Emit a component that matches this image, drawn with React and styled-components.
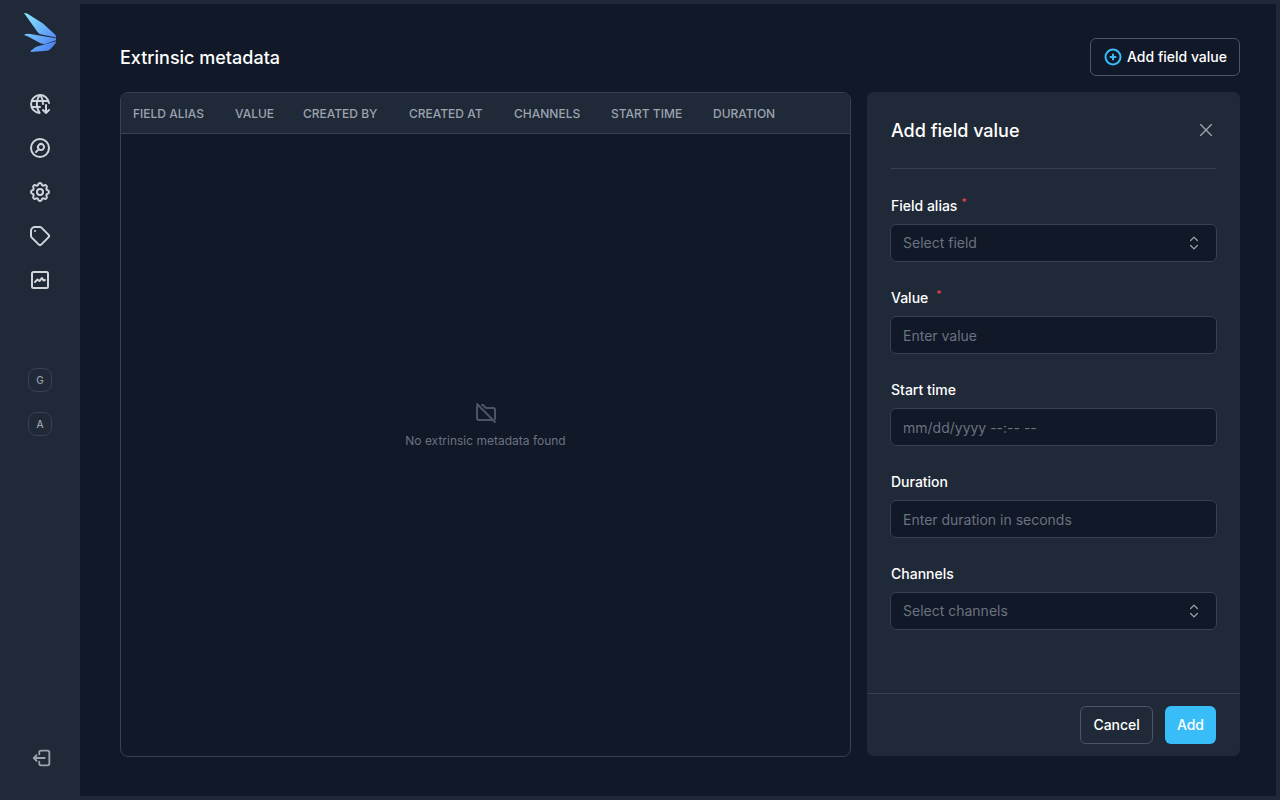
import React from "react";
import styled, { createGlobalStyle } from "styled-components";

const Global = createGlobalStyle`
  *, *::before, *::after { box-sizing: border-box; }
  body {
    margin: 0;
    background: #1f2937;
    color: #fff;
    font-family: Inter, "Liberation Sans", sans-serif;
    font-size: 14px;
    line-height: 20px;
  }
  button, input, select { font: inherit; }
`;

const Shell = styled.div`
  display: flex;
  min-height: 100vh;
`;

const Sidebar = styled.nav`
  flex: 0 0 80px;
  display: flex;
  flex-direction: column;
  align-items: center;
  padding: 12px 0 31px;
`;

const LogoLink = styled.a`
  display: flex;
  width: 34px;
  height: 40px;
`;

const NavList = styled.ul`
  list-style: none;
  margin: 40px 0 0;
  padding: 0;
  display: grid;
  gap: 20px;
`;

const NavLink = styled.a`
  display: flex;
  color: #d1d5db;
`;

const Badges = styled.div`
  display: grid;
  gap: 20px;
  margin-top: 76px;
`;

const Badge = styled.button`
  width: 24px;
  height: 24px;
  padding: 0;
  border: 1px solid #374151;
  border-radius: 8px;
  background: transparent;
  color: #9ca3af;
  font-size: 10px;
  line-height: 16px;
  font-weight: 500;
`;

const IconButton = styled.button`
  display: flex;
  padding: 0;
  border: 0;
  background: transparent;
  color: #9ca3af;
`;

const LogoutButton = styled(IconButton)`
  margin-top: auto;
  padding-left: 4px;
`;

const Main = styled.main`
  flex: 1;
  min-width: 0;
  display: flex;
  flex-direction: column;
  gap: 16px;
  margin: 4px 4px 4px 0;
  padding: 34px 36px 39px 40px;
  background: #111827;
`;

const PageHeader = styled.header`
  display: flex;
  align-items: center;
  justify-content: space-between;
`;

const Title = styled.h1`
  margin: 0;
  padding-top: 2px;
  font-size: 18px;
  line-height: 28px;
  font-weight: 500;
`;

const Button = styled.button`
  display: inline-flex;
  align-items: center;
  gap: 4px;
  height: 38px;
  padding: 0 12px;
  border: ${(p) => (p.$primary ? "0" : "1px solid #4b5563")};
  border-radius: 6px;
  background: ${(p) => (p.$primary ? "#38bdf8" : "transparent")};
  color: #fff;
  font-weight: 500;
`;

const Accent = styled.span`
  display: flex;
  color: #38bdf8;
`;

const Content = styled.div`
  flex: 1;
  display: grid;
  grid-template-columns: minmax(0, 731fr) minmax(0, 373fr);
  gap: 16px;
`;

const TableCard = styled.section`
  display: flex;
  flex-direction: column;
  border: 1px solid #374151;
  border-radius: 8px;
  overflow: hidden;
`;

const HeadStrip = styled.div`
  background: #1f2937;
  border-bottom: 1px solid #374151;
`;

const Table = styled.table`
  border-collapse: collapse;
  table-layout: fixed;
`;

const Th = styled.th`
  width: ${(p) => p.$width}px;
  height: 40px;
  padding: 2px 0 0 12px;
  color: #9ca3af;
  font-size: 12px;
  line-height: 16px;
  font-weight: 500;
  text-align: left;
  white-space: nowrap;
`;

const Empty = styled.div`
  flex: 1;
  display: flex;
  flex-direction: column;
  align-items: center;
  justify-content: center;
  gap: 8px;
  padding-bottom: 40px;
  color: #4b5563;
`;

const EmptyText = styled.p`
  margin: 0;
  color: #6b7280;
  font-size: 12px;
  line-height: 16px;
`;

const Panel = styled.form`
  display: flex;
  flex-direction: column;
  margin-bottom: 1px;
  background: #1f2937;
  border-radius: 6px;
`;

const PanelHeader = styled.header`
  display: flex;
  align-items: center;
  justify-content: space-between;
  height: 77px;
  margin: 0 24px;
  border-bottom: 1px solid #374151;
`;

const Fields = styled.div`
  flex: 1;
  display: grid;
  align-content: start;
  gap: 26px;
  padding: 27px 23px;
`;

const Field = styled.div`
  display: grid;
  gap: 8px;
`;

const Label = styled.label`
  display: flex;
  gap: ${(p) => p.$gap || 4}px;
  height: 20px;
  padding-left: 1px;
  font-weight: 500;
`;

const Star = styled.span`
  color: #ef4444;
  font-size: 10px;
  line-height: 12px;
`;

const control = `
  width: 100%;
  height: 38px;
  padding: 0 12px;
  border: 1px solid #374151;
  border-radius: 6px;
  background: #111827;
  color: #6b7280;
`;

const Input = styled.input`
  ${control}
  &::placeholder { color: #6b7280; opacity: 1; }
`;

const SelectWrap = styled.div`
  display: grid;
  align-items: center;
  & > * { grid-area: 1 / 1; }
  & > svg {
    justify-self: end;
    margin-right: 13px;
    color: #9ca3af;
    pointer-events: none;
  }
`;

const Select = styled.select`
  ${control}
  appearance: none;
`;

const PanelFooter = styled.footer`
  display: flex;
  justify-content: flex-end;
  gap: 12px;
  padding: 12px 24px;
  border-top: 1px solid #374151;
`;

function Icon({ d, size = 24, stroke = 2 }) {
  return (
    <svg width={size} height={size} viewBox="0 0 24 24" fill="none" stroke="currentColor"
      strokeWidth={stroke} strokeLinecap="round" strokeLinejoin="round" aria-hidden="true">
      <path d={d} />
    </svg>
  );
}

const icons = {
  globe: "M21 11a9 9 0 1 0-9.5 10M3.6 9h16.8M3.6 15h8.4M11.6 3a17 17 0 0 0 0 18M12.4 3a17 17 0 0 1 2.6 9M18 13v8m-3-3l3 3 3-3",
  search: "M8 16l2.879-2.879m0 0a3 3 0 104.243-4.242 3 3 0 00-4.243 4.242zM21 12a9 9 0 11-18 0 9 9 0 0118 0z",
  cog: "M10.325 4.317c.426-1.756 2.924-1.756 3.35 0a1.724 1.724 0 002.573 1.066c1.543-.94 3.31.826 2.37 2.37a1.724 1.724 0 001.065 2.572c1.756.426 1.756 2.924 0 3.35a1.724 1.724 0 00-1.066 2.573c.94 1.543-.826 3.31-2.37 2.37a1.724 1.724 0 00-2.572 1.065c-.426 1.756-2.924 1.756-3.35 0a1.724 1.724 0 00-2.573-1.066c-1.543.94-3.31-.826-2.37-2.37a1.724 1.724 0 00-1.065-2.572c-1.756-.426-1.756-2.924 0-3.35a1.724 1.724 0 001.066-2.573c-.94-1.543.826-3.31 2.37-2.37.996.608 2.296.07 2.572-1.065zM15 12a3 3 0 11-6 0 3 3 0 016 0z",
  tag: "M7 7h.01M7 3h5c.512 0 1.024.195 1.414.586l7 7a2 2 0 010 2.828l-7 7a2 2 0 01-2.828 0l-7-7A1.994 1.994 0 013 12V7a4 4 0 014-4z",
  chart: "M5.5 4h13A1.5 1.5 0 0 1 20 5.500v13a1.500 1.500 0 0 1-1.500 1.500h-13A1.500 1.500 0 0 1 4 18.500v-13A1.500 1.500 0 0 1 5.500 4zM7 14l2.500-2.500 2 1.500 2.500-3 1.500 2.500 1.500-.5",
  logout: "M9 8V6a2 2 0 0 1 2-2h7a2 2 0 0 1 2 2v12a2 2 0 0 1-2 2h-7a2 2 0 0 1-2-2v-2M15 12H3M6 9l-3 3 3 3",
  plus: "M12 9v3m0 0v3m0-3h3m-3 0H9m12 0a9 9 0 11-18 0 9 9 0 0118 0z",
  close: "M5.500 18.500L18.500 5.500M5.500 5.500l13 13",
  folderOff: "M3 3l18 18M19 19H5a2 2 0 0 1-2-2V6a2 2 0 0 1 1.200-1.800M8 4h1l3 3h7a2 2 0 0 1 2 2v9",
  selector: "M8 9l4-4 4 4M8 15l4 4 4-4",
};

const nav = [
  ["Data sources", "globe"],
  ["Search", "search"],
  ["Settings", "cog"],
  ["Tags", "tag"],
  ["Signals", "chart"],
];

const columns = [
  ["FIELD ALIAS", 102],
  ["VALUE", 68],
  ["CREATED BY", 106],
  ["CREATED AT", 105],
  ["CHANNELS", 97],
  ["START TIME", 102],
  ["DURATION", 90],
];

function SelectField({ id, placeholder }) {
  return (
    <SelectWrap>
      <Select id={id} defaultValue="">
        <option value="">{placeholder}</option>
      </Select>
      <Icon d={icons.selector} size={20} stroke={1.5} />
    </SelectWrap>
  );
}

function Logo() {
  return (
    <svg width="34" height="40" viewBox="0 0 34 40" aria-hidden="true">
      <defs>
        <linearGradient id="wing" gradientUnits="userSpaceOnUse" x1="1" y1="5" x2="33" y2="34">
          <stop offset="0" stopColor="#86e3fd" />
          <stop offset="1" stopColor="#4d80f5" />
        </linearGradient>
      </defs>
      <g fill="url(#wing)">
        <path d="M1 1Q3 .8 5 2L20 11.500 32 22.500Q33.500 24 33 25.500L18.500 22.500Q16 22 14.500 20z" />
        <path d="M1 23Q3 21.500 6 21.800L33 26.300V28.300L23 31.700Q20 32.500 17 31L5 24.500z" />
        <path d="M33 29.300Q33 31 31.500 32.500L27.500 37Q26 38.500 24 38.700L8 40 7.500 39 12 35.500Q13 34.700 15 34.200z" />
      </g>
    </svg>
  );
}

export default function App() {
  return (
    <>
      <Global />
      <Shell>
        <Sidebar aria-label="Main">
          <LogoLink href="#" aria-label="Home"><Logo /></LogoLink>
          <NavList>
            {nav.map(([label, icon]) => (
              <li key={label}>
                <NavLink href="#" aria-label={label}><Icon d={icons[icon]} /></NavLink>
              </li>
            ))}
          </NavList>
          <Badges>
            <Badge type="button">G</Badge>
            <Badge type="button">A</Badge>
          </Badges>
          <LogoutButton type="button" aria-label="Log out">
            <Icon d={icons.logout} size={22} />
          </LogoutButton>
        </Sidebar>
        <Main>
          <PageHeader>
            <Title>Extrinsic metadata</Title>
            <Button type="button">
              <Accent><Icon d={icons.plus} size={20} stroke={2.4} /></Accent>
              Add field value
            </Button>
          </PageHeader>
          <Content>
            <TableCard>
              <HeadStrip>
                <Table>
                  <thead>
                    <tr>{columns.map(([name, width]) => <Th key={name} scope="col" $width={width}>{name}</Th>)}</tr>
                  </thead>
                </Table>
              </HeadStrip>
              <Empty>
                <Icon d={icons.folderOff} />
                <EmptyText>No extrinsic metadata found</EmptyText>
              </Empty>
            </TableCard>
            <Panel>
              <PanelHeader>
                <Title as="h2">Add field value</Title>
                <IconButton type="button" aria-label="Close"><Icon d={icons.close} size={20} stroke={1.6} /></IconButton>
              </PanelHeader>
              <Fields>
                <Field>
                  <Label htmlFor="alias">Field alias<Star>*</Star></Label>
                  <SelectField id="alias" placeholder="Select field" />
                </Field>
                <Field>
                  <Label htmlFor="value" $gap={8}>Value<Star>*</Star></Label>
                  <Input id="value" placeholder="Enter value" />
                </Field>
                <Field>
                  <Label htmlFor="start">Start time</Label>
                  <Input id="start" placeholder="mm/dd/yyyy --:-- --" />
                </Field>
                <Field>
                  <Label htmlFor="duration">Duration</Label>
                  <Input id="duration" placeholder="Enter duration in seconds" />
                </Field>
                <Field>
                  <Label htmlFor="channels">Channels</Label>
                  <SelectField id="channels" placeholder="Select channels" />
                </Field>
              </Fields>
              <PanelFooter>
                <Button type="button">Cancel</Button>
                <Button type="submit" $primary>Add</Button>
              </PanelFooter>
            </Panel>
          </Content>
        </Main>
      </Shell>
    </>
  );
}
